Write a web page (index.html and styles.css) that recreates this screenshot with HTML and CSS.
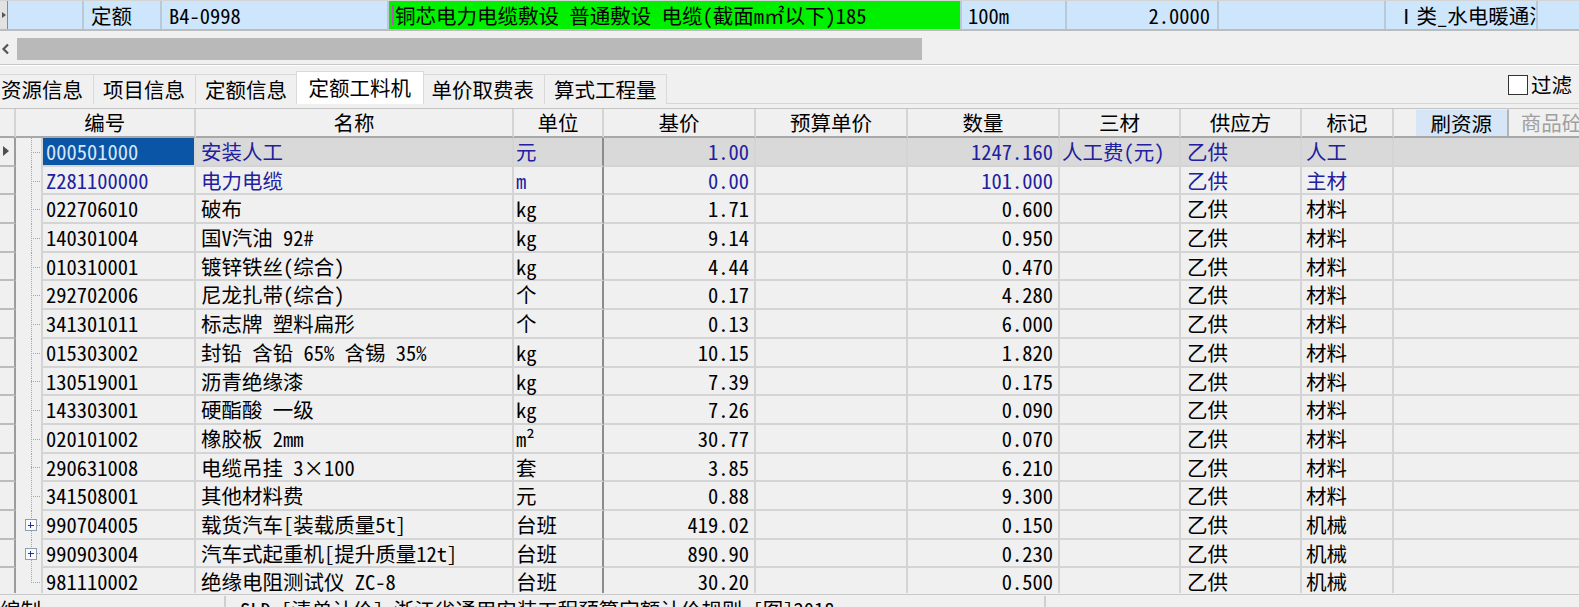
FILE: index.html
```html
<!DOCTYPE html>
<html lang="zh-CN">
<head>
<meta charset="utf-8">
<title>定额工料机</title>
<link rel="stylesheet" href="styles.css">
</head>
<body>
<div class="app">
  <div class="toprow">
    <div class="tc t-ind"><span class="tri-s"></span></div>
    <div class="tc t-blank"></div>
    <div class="tc t-type">定额</div>
    <div class="tc t-code">B4-0998</div>
    <div class="tc t-name"><span class="caret"></span>铜芯电力电缆敷设 普通敷设 电缆(截面m㎡以下)185</div>
    <div class="tc t-unit">100m</div>
    <div class="tc t-qty">2.0000</div>
    <div class="tc t-empty"></div>
    <div class="tc t-cat">Ⅰ类_水电暖通消防</div>
    <div class="tc t-rest"></div>
  </div>

  <div class="hscroll">
    <span class="arrow"><svg width="9" height="12" viewBox="0 0 9 12"><path d="M7 1.5 L2.5 6 L7 10.5" fill="none" stroke="#555" stroke-width="2.2"/></svg></span>
    <span class="thumb"></span>
  </div>
  <div class="rule"></div>

  <div class="tabbar">
    <div class="tab first">资源信息</div>
    <div class="tab">项目信息</div>
    <div class="tab">定额信息</div>
    <div class="tab active">定额工料机</div>
    <div class="tab">单价取费表</div>
    <div class="tab">算式工程量</div>
    <label class="filter"><span class="chk"></span>过滤</label>
  </div>

  <div class="grid">
    <div class="row head">
      <div class="c ind"></div>
      <div class="c hcode">编号</div>
      <div class="c">名称</div>
      <div class="c">单位</div>
      <div class="c">基价</div>
      <div class="c">预算单价</div>
      <div class="c">数量</div>
      <div class="c">三材</div>
      <div class="c">供应方</div>
      <div class="c">标记</div>
      <div class="c rest tools"><span class="btn-brush">刷资源</span><span class="btn-goods">商品砼</span></div>
    </div>

    <div class="row sel blue">
      <div class="c ind"><span class="tri"></span></div>
      <div class="c tree"><span class="stub"></span></div>
      <div class="c code cur">000501000</div>
      <div class="c name">安装人工</div>
      <div class="c unit">元</div>
      <div class="c price">1.00</div>
      <div class="c budget"></div>
      <div class="c qty">1247.160</div>
      <div class="c sc">人工费(元)</div>
      <div class="c sup">乙供</div>
      <div class="c mark">人工</div>
      <div class="c rest"></div>
    </div>
    <div class="row blue">
      <div class="c ind"></div>
      <div class="c tree"><span class="stub"></span></div>
      <div class="c code">Z281100000</div>
      <div class="c name">电力电缆</div>
      <div class="c unit">m</div>
      <div class="c price">0.00</div>
      <div class="c budget"></div>
      <div class="c qty">101.000</div>
      <div class="c sc"></div>
      <div class="c sup">乙供</div>
      <div class="c mark">主材</div>
      <div class="c rest"></div>
    </div>
    <div class="row">
      <div class="c ind"></div>
      <div class="c tree"><span class="stub"></span></div>
      <div class="c code">022706010</div>
      <div class="c name">破布</div>
      <div class="c unit">kg</div>
      <div class="c price">1.71</div>
      <div class="c budget"></div>
      <div class="c qty">0.600</div>
      <div class="c sc"></div>
      <div class="c sup">乙供</div>
      <div class="c mark">材料</div>
      <div class="c rest"></div>
    </div>
    <div class="row">
      <div class="c ind"></div>
      <div class="c tree"><span class="stub"></span></div>
      <div class="c code">140301004</div>
      <div class="c name">国V汽油 92#</div>
      <div class="c unit">kg</div>
      <div class="c price">9.14</div>
      <div class="c budget"></div>
      <div class="c qty">0.950</div>
      <div class="c sc"></div>
      <div class="c sup">乙供</div>
      <div class="c mark">材料</div>
      <div class="c rest"></div>
    </div>
    <div class="row">
      <div class="c ind"></div>
      <div class="c tree"><span class="stub"></span></div>
      <div class="c code">010310001</div>
      <div class="c name">镀锌铁丝(综合)</div>
      <div class="c unit">kg</div>
      <div class="c price">4.44</div>
      <div class="c budget"></div>
      <div class="c qty">0.470</div>
      <div class="c sc"></div>
      <div class="c sup">乙供</div>
      <div class="c mark">材料</div>
      <div class="c rest"></div>
    </div>
    <div class="row">
      <div class="c ind"></div>
      <div class="c tree"><span class="stub"></span></div>
      <div class="c code">292702006</div>
      <div class="c name">尼龙扎带(综合)</div>
      <div class="c unit">个</div>
      <div class="c price">0.17</div>
      <div class="c budget"></div>
      <div class="c qty">4.280</div>
      <div class="c sc"></div>
      <div class="c sup">乙供</div>
      <div class="c mark">材料</div>
      <div class="c rest"></div>
    </div>
    <div class="row">
      <div class="c ind"></div>
      <div class="c tree"><span class="stub"></span></div>
      <div class="c code">341301011</div>
      <div class="c name">标志牌 塑料扁形</div>
      <div class="c unit">个</div>
      <div class="c price">0.13</div>
      <div class="c budget"></div>
      <div class="c qty">6.000</div>
      <div class="c sc"></div>
      <div class="c sup">乙供</div>
      <div class="c mark">材料</div>
      <div class="c rest"></div>
    </div>
    <div class="row">
      <div class="c ind"></div>
      <div class="c tree"><span class="stub"></span></div>
      <div class="c code">015303002</div>
      <div class="c name">封铅 含铅 65% 含锡 35%</div>
      <div class="c unit">kg</div>
      <div class="c price">10.15</div>
      <div class="c budget"></div>
      <div class="c qty">1.820</div>
      <div class="c sc"></div>
      <div class="c sup">乙供</div>
      <div class="c mark">材料</div>
      <div class="c rest"></div>
    </div>
    <div class="row">
      <div class="c ind"></div>
      <div class="c tree"><span class="stub"></span></div>
      <div class="c code">130519001</div>
      <div class="c name">沥青绝缘漆</div>
      <div class="c unit">kg</div>
      <div class="c price">7.39</div>
      <div class="c budget"></div>
      <div class="c qty">0.175</div>
      <div class="c sc"></div>
      <div class="c sup">乙供</div>
      <div class="c mark">材料</div>
      <div class="c rest"></div>
    </div>
    <div class="row">
      <div class="c ind"></div>
      <div class="c tree"><span class="stub"></span></div>
      <div class="c code">143303001</div>
      <div class="c name">硬酯酸 一级</div>
      <div class="c unit">kg</div>
      <div class="c price">7.26</div>
      <div class="c budget"></div>
      <div class="c qty">0.090</div>
      <div class="c sc"></div>
      <div class="c sup">乙供</div>
      <div class="c mark">材料</div>
      <div class="c rest"></div>
    </div>
    <div class="row">
      <div class="c ind"></div>
      <div class="c tree"><span class="stub"></span></div>
      <div class="c code">020101002</div>
      <div class="c name">橡胶板 2mm</div>
      <div class="c unit">m²</div>
      <div class="c price">30.77</div>
      <div class="c budget"></div>
      <div class="c qty">0.070</div>
      <div class="c sc"></div>
      <div class="c sup">乙供</div>
      <div class="c mark">材料</div>
      <div class="c rest"></div>
    </div>
    <div class="row">
      <div class="c ind"></div>
      <div class="c tree"><span class="stub"></span></div>
      <div class="c code">290631008</div>
      <div class="c name">电缆吊挂 3×100</div>
      <div class="c unit">套</div>
      <div class="c price">3.85</div>
      <div class="c budget"></div>
      <div class="c qty">6.210</div>
      <div class="c sc"></div>
      <div class="c sup">乙供</div>
      <div class="c mark">材料</div>
      <div class="c rest"></div>
    </div>
    <div class="row">
      <div class="c ind"></div>
      <div class="c tree"><span class="stub"></span></div>
      <div class="c code">341508001</div>
      <div class="c name">其他材料费</div>
      <div class="c unit">元</div>
      <div class="c price">0.88</div>
      <div class="c budget"></div>
      <div class="c qty">9.300</div>
      <div class="c sc"></div>
      <div class="c sup">乙供</div>
      <div class="c mark">材料</div>
      <div class="c rest"></div>
    </div>
    <div class="row">
      <div class="c ind"></div>
      <div class="c tree node"><span class="box"></span><span class="stub"></span></div>
      <div class="c code">990704005</div>
      <div class="c name">载货汽车[装载质量5t]</div>
      <div class="c unit">台班</div>
      <div class="c price">419.02</div>
      <div class="c budget"></div>
      <div class="c qty">0.150</div>
      <div class="c sc"></div>
      <div class="c sup">乙供</div>
      <div class="c mark">机械</div>
      <div class="c rest"></div>
    </div>
    <div class="row">
      <div class="c ind"></div>
      <div class="c tree node"><span class="box"></span><span class="stub"></span></div>
      <div class="c code">990903004</div>
      <div class="c name">汽车式起重机[提升质量12t]</div>
      <div class="c unit">台班</div>
      <div class="c price">890.90</div>
      <div class="c budget"></div>
      <div class="c qty">0.230</div>
      <div class="c sc"></div>
      <div class="c sup">乙供</div>
      <div class="c mark">机械</div>
      <div class="c rest"></div>
    </div>
    <div class="row last">
      <div class="c ind"></div>
      <div class="c tree"><span class="stub"></span></div>
      <div class="c code">981110002</div>
      <div class="c name">绝缘电阻测试仪 ZC-8</div>
      <div class="c unit">台班</div>
      <div class="c price">30.20</div>
      <div class="c budget"></div>
      <div class="c qty">0.500</div>
      <div class="c sc"></div>
      <div class="c sup">乙供</div>
      <div class="c mark">机械</div>
      <div class="c rest"></div>
    </div>
  </div>

  <div class="status">
    <div class="sp sp1">编制</div>
    <div class="sp sp2">SLD  [清单计价] 浙江省通用安装工程预算定额计价规则 [图]2018</div>
    <div class="sp sp3"></div>
  </div>
</div>
</body>
</html>
```

FILE: styles.css
```css
* { box-sizing: border-box; }
html, body { margin: 0; padding: 0; }
body {
  width: 1579px;
  height: 607px;
  overflow: hidden;
  background: #f0f0f0;
  font-family: "Noto Sans Mono CJK SC", "Noto Sans CJK SC", "Noto Sans CJK JP", sans-serif;
  font-size: 20.5px;
  font-weight: 300;
  line-height: 1.2;
  color: #000;
}
.app { width: 1579px; height: 607px; overflow: hidden; }

/* top row */
.toprow {
  display: flex;
  height: 31px;
  border-top: 1px solid #d4d4d4;
  border-bottom: 2px solid #bcbcbc;
  background: #cde6fb;
}
.tc {
  display: flex;
  align-items: center;
  white-space: nowrap;
  border-right: 2px solid #b9c9d8;
  flex: none;
}
.t-ind { width: 8px; background: #e2e2e2; border-right: 1px solid #8a8a8a; padding-left: 2px; }
.tri-s { width: 0; height: 0; border-left: 4px solid #555; border-top: 3px solid transparent; border-bottom: 3px solid transparent; }
.t-blank { width: 76px; }
.t-type { width: 78px; padding-left: 7px; }
.t-code { width: 227px; padding-left: 7px; }
.t-name { width: 573px; padding-left: 3px; background: #00f000; }
.caret { width: 2px; height: 20px; background: #c050c0; margin-right: 1px; flex: none; }
.t-unit { width: 105px; padding-left: 6px; }
.t-qty { width: 152px; padding-right: 7px; justify-content: flex-end; }
.t-empty { width: 167px; }
.t-cat { width: 152px; padding-left: 10px; overflow: hidden; }
.t-rest { flex: 1; border-right: none; }

/* horizontal scroll bar */
.hscroll {
  display: flex;
  align-items: flex-start;
  height: 33px;
  padding-top: 7px;
}
.arrow { width: 17px; height: 22px; display: flex; align-items: center; padding-left: 1px; }
.thumb { width: 905px; height: 22px; background: #b9b9b9; }
.rule { height: 2px; border-top: 1px solid #c8c8c8; border-bottom: 1px solid #fdfdfd; }

/* tabs */
.tabbar {
  display: flex;
  align-items: flex-end;
  height: 38px;
  border-bottom: 1px solid #d6d6d6;
}
.tab {
  height: 30px;
  margin-bottom: -1px;
  margin-left: -1px;
  padding: 0 9.5px;
  display: flex;
  align-items: center;
  background: #f0f0f0;
  border: 1px solid #d9d9d9;
  border-bottom: none;
  white-space: nowrap;
}
.tab.first { margin-left: 0; padding-left: 1px; border-left: none; }
.tab.active {
  position: relative;
  z-index: 1;
  height: 33px;
  margin-left: -2px;
  margin-right: -2px;
  padding: 0 12px 2px;
  background: #ffffff;
}
.filter {
  margin-left: auto;
  margin-right: 7px;
  align-self: center;
  display: flex;
  align-items: center;
  gap: 3px;
}
.chk { width: 20px; height: 20px; border: 1px solid #333; background: #fff; }

/* grid */
.grid {
  --cols: 15.5px 27.5px 153px 318px 90px 152px 152px 152px 121px 121px 92px 1fr;
  margin-top: 4px;
  height: 485px;
  overflow: hidden;
  border-top: 1px solid #c4c4c4;
}
.row {
  display: grid;
  grid-template-columns: var(--cols);
  height: 28.7px;
}
.row.head { height: 29px; }
.c {
  display: flex;
  align-items: center;
  white-space: nowrap;
  min-width: 0;
  border-right: 2px solid #d4d4d4;
  border-bottom: 2px solid #d4d4d4;
}
.head .c { justify-content: center; border-bottom: 2px solid #a8a8a8; }
.head .hcode { grid-column: span 2; }
.ind { border-right: 2px solid #9c9c9c; border-bottom-color: #bcbcbc; padding-left: 3px; }
.head .ind { border-bottom-color: #a8a8a8; }
.tri { width: 0; height: 0; border-left: 6px solid #505050; border-top: 5px solid transparent; border-bottom: 5px solid transparent; }

.tree {
  border-bottom: none;
  padding-left: 15px;
  background: repeating-linear-gradient(to bottom, #a4a4a4 0 1px, transparent 1px 2px) 15px 0 / 1px 100% no-repeat;
}
.row.last .tree { background-size: 1px 50%; }
.tree.node { padding-left: 9px; }
.stub {
  flex: 1;
  height: 1px;
  background: repeating-linear-gradient(to right, #a4a4a4 0 1px, transparent 1px 2px);
}
.box {
  width: 12px;
  height: 12px;
  flex: none;
  border: 1px solid #8e9cb2;
  background:
    linear-gradient(#23358a, #23358a) center / 6px 1px no-repeat,
    linear-gradient(#23358a, #23358a) center / 1px 6px no-repeat,
    #fafafa;
}
.code { padding-left: 3px; }
.name { padding-left: 5px; }
.unit { padding-left: 2px; border-right-color: #8c8c8c; }
.head .unit, .head .c { border-right-color: #d4d4d4; }
.price, .qty { justify-content: flex-end; padding-right: 5px; }
.sc { padding-left: 2px; }
.sup { padding-left: 6px; }
.mark { padding-left: 4px; }
.rest { border-right: none; }

.blue { color: #2020a0; }
.sel .name, .sel .unit, .sel .price, .sel .budget, .sel .qty,
.sel .sc, .sel .sup, .sel .mark, .sel .rest { background: #d9d9d9; }
.sel .cur { background: #0a55a6; color: #d8e6f6; }

.tools { justify-content: flex-start; padding-left: 25px; align-items: stretch; }
.btn-brush {
  width: 93px;
  flex: none;
  display: flex;
  align-items: center;
  justify-content: center;
  background: #d6e6f6;
  border-right: 2px solid #b4b4b4;
  border-top: 1px solid #e6eef8;
}
.btn-goods {
  display: flex;
  align-items: center;
  padding-left: 12px;
  color: #a0a0a0;
  white-space: nowrap;
}

/* status bar */
.status {
  display: flex;
  height: 20px;
  margin-top: 1px;
  border-top: 1px solid #c8c8c8;
  padding-top: 1px;
  background: #f0f0f0;
}
.sp { white-space: nowrap; padding-top: 1px; }
.sp1 { width: 226px; border-right: 2px solid #cfcfcf; }
.sp2 { width: 820px; padding-left: 14px; border-right: 2px solid #cfcfcf; }
.sp3 { flex: 1; }
```
